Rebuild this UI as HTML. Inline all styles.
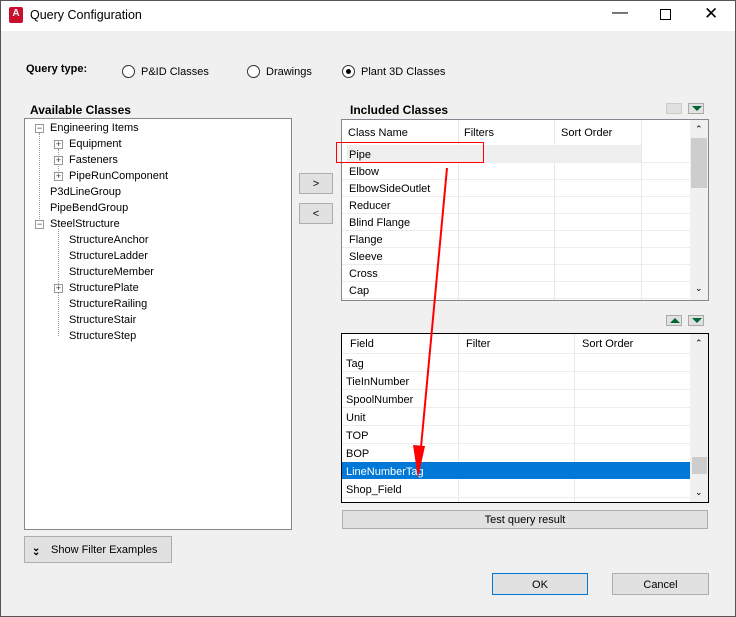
<html><head><style>
body{margin:0;width:736px;height:617px;position:relative;background:#f0f0f0;font-family:"Liberation Sans",sans-serif;font-size:11px;color:#000;overflow:hidden}
.a{position:absolute}
.box{position:absolute;background:#fff;border:1px solid #828790;box-sizing:border-box}
.btn{position:absolute;background:#e1e1e1;border:1px solid #adadad;box-sizing:border-box;text-align:center;padding-top:1px}
.t{position:absolute;white-space:nowrap;margin-top:1px}
.rad{position:absolute;width:11px;height:11px;border:1px solid #333;border-radius:50%;background:#fff}
.pm{position:absolute;width:7px;height:7px;border:1px solid #999;background:#fff;font-size:9px;line-height:7px;text-align:center;color:#335}
.hl{position:absolute;height:0;border-top:1px solid #ececec}
.vl{position:absolute;border-left:1px solid #e8e8e8}
.arr{position:absolute;width:16px;height:11px;background:#e1e1e1;border:1px solid #aaa;box-sizing:border-box}
</style></head><body>
<div class="a" style="left:0;top:0;width:736px;height:31px;background:#fff"></div>
<div class="a" style="left:9px;top:7px;width:14px;height:16px;background:#c8102e;border-radius:2px;color:#fff;font-size:10px;font-weight:bold;text-align:center;line-height:13px">A</div>
<div class="t" style="left:30px;top:7px;font-size:12.5px">Query Configuration</div>
<div class="t" style="left:612px;top:3px;font-size:16px">&#8212;</div>
<div class="a" style="left:660px;top:9px;width:9px;height:9px;border:1px solid #000"></div>
<div class="t" style="left:704px;top:3px;font-size:17px">&#10005;</div>
<div class="a" style="left:0;top:0;width:734px;height:615px;border:1px solid #555"></div>

<div class="t" style="left:26px;top:62px;font-weight:bold">Query type:</div>
<div class="rad" style="left:122px;top:65px"></div><div class="t" style="left:141px;top:65px">P&amp;ID Classes</div>
<div class="rad" style="left:247px;top:65px"></div><div class="t" style="left:266px;top:65px">Drawings</div>
<div class="rad" style="left:342px;top:65px"></div><div class="a" style="left:346px;top:69px;width:5px;height:5px;border-radius:50%;background:#000"></div><div class="t" style="left:361px;top:65px">Plant 3D Classes</div>

<div class="t" style="left:30px;top:102px;font-weight:bold;font-size:12px">Available Classes</div>
<div class="box" style="left:24px;top:118px;width:268px;height:412px"></div>
<div class="a" style="left:39px;top:133px;height:96px;border-left:1px dotted #999"></div>
<div class="a" style="left:58px;top:149px;height:30px;border-left:1px dotted #999"></div>
<div class="a" style="left:58px;top:229px;height:107px;border-left:1px dotted #999"></div>
<div class="pm" style="left:35px;top:124px">−</div><div class="t" style="left:50px;top:121px">Engineering Items</div>
<div class="pm" style="left:54px;top:140px">+</div><div class="t" style="left:69px;top:137px">Equipment</div>
<div class="pm" style="left:54px;top:156px">+</div><div class="t" style="left:69px;top:153px">Fasteners</div>
<div class="pm" style="left:54px;top:172px">+</div><div class="t" style="left:69px;top:169px">PipeRunComponent</div>
<div class="t" style="left:50px;top:185px">P3dLineGroup</div>
<div class="t" style="left:50px;top:201px">PipeBendGroup</div>
<div class="pm" style="left:35px;top:220px">−</div><div class="t" style="left:50px;top:217px">SteelStructure</div>
<div class="t" style="left:69px;top:233px">StructureAnchor</div>
<div class="t" style="left:69px;top:249px">StructureLadder</div>
<div class="t" style="left:69px;top:265px">StructureMember</div>
<div class="pm" style="left:54px;top:284px">+</div><div class="t" style="left:69px;top:281px">StructurePlate</div>
<div class="t" style="left:69px;top:297px">StructureRailing</div>
<div class="t" style="left:69px;top:313px">StructureStair</div>
<div class="t" style="left:69px;top:329px">StructureStep</div>

<div class="btn" style="left:299px;top:173px;width:34px;height:21px;line-height:19px">&gt;</div>
<div class="btn" style="left:299px;top:203px;width:34px;height:21px;line-height:19px">&lt;</div>

<div class="t" style="left:350px;top:102px;font-weight:bold;font-size:12px">Included Classes</div>
<div class="arr" style="left:666px;top:103px;border-color:#ccc"></div>
<div class="arr" style="left:688px;top:103px"><div class="a" style="left:3px;top:2px;border:5px solid transparent;border-top:5px solid #063;border-bottom:0"></div></div>
<div class="box" style="left:341px;top:119px;width:368px;height:182px"></div>
<div class="hl" style="left:342px;top:162px;width:348px"></div><div class="hl" style="left:342px;top:179px;width:348px"></div><div class="hl" style="left:342px;top:196px;width:348px"></div><div class="hl" style="left:342px;top:213px;width:348px"></div><div class="hl" style="left:342px;top:230px;width:348px"></div><div class="hl" style="left:342px;top:247px;width:348px"></div><div class="hl" style="left:342px;top:264px;width:348px"></div><div class="hl" style="left:342px;top:281px;width:348px"></div><div class="hl" style="left:342px;top:298px;width:348px"></div>
<div class="vl" style="left:458px;top:120px;height:180px"></div>
<div class="vl" style="left:554px;top:120px;height:180px"></div>
<div class="vl" style="left:641px;top:120px;height:180px"></div>
<div class="a" style="left:347px;top:145px;width:294px;height:17px;background:#efefef"></div>
<div class="a" style="left:690px;top:120px;width:18px;height:180px;background:#f0f0f0"></div>
<div class="a" style="left:691px;top:138px;width:16px;height:50px;background:#cdcdcd"></div>
<div class="t" style="left:695px;top:123px;font-size:9px">&#8963;</div><div class="t" style="left:695px;top:282px;font-size:9px">&#8964;</div>
<div class="t" style="left:348px;top:126px">Class Name</div><div class="t" style="left:464px;top:126px">Filters</div><div class="t" style="left:561px;top:126px">Sort Order</div>
<div class="t" style="left:349px;top:148px">Pipe</div>
<div class="t" style="left:349px;top:165px">Elbow</div>
<div class="t" style="left:349px;top:182px">ElbowSideOutlet</div>
<div class="t" style="left:349px;top:199px">Reducer</div>
<div class="t" style="left:349px;top:216px">Blind Flange</div>
<div class="t" style="left:349px;top:233px">Flange</div>
<div class="t" style="left:349px;top:250px">Sleeve</div>
<div class="t" style="left:349px;top:267px">Cross</div>
<div class="t" style="left:349px;top:284px">Cap</div>
<div class="a" style="left:336px;top:142px;width:146px;height:19px;border:1.5px solid #f00"></div>

<div class="arr" style="left:666px;top:315px"><div class="a" style="left:3px;top:2px;border:5px solid transparent;border-bottom:5px solid #063;border-top:0"></div></div>
<div class="arr" style="left:688px;top:315px"><div class="a" style="left:3px;top:2px;border:5px solid transparent;border-top:5px solid #063;border-bottom:0"></div></div>
<div class="box" style="left:341px;top:333px;width:368px;height:170px;border:1px solid #000"></div>
<div class="hl" style="left:342px;top:353px;width:348px"></div><div class="hl" style="left:342px;top:371px;width:348px"></div><div class="hl" style="left:342px;top:389px;width:348px"></div><div class="hl" style="left:342px;top:407px;width:348px"></div><div class="hl" style="left:342px;top:425px;width:348px"></div><div class="hl" style="left:342px;top:443px;width:348px"></div><div class="hl" style="left:342px;top:497px;width:348px"></div>
<div class="vl" style="left:458px;top:334px;height:168px"></div>
<div class="vl" style="left:574px;top:334px;height:168px"></div>
<div class="a" style="left:342px;top:462px;width:348px;height:17px;background:#0078d7"></div>
<div class="a" style="left:690px;top:334px;width:18px;height:168px;background:#f0f0f0"></div>
<div class="a" style="left:692px;top:457px;width:15px;height:17px;background:#cdcdcd"></div>
<div class="t" style="left:695px;top:337px;font-size:9px">&#8963;</div><div class="t" style="left:695px;top:486px;font-size:9px">&#8964;</div>
<div class="t" style="left:350px;top:337px">Field</div><div class="t" style="left:466px;top:337px">Filter</div><div class="t" style="left:582px;top:337px">Sort Order</div>
<div class="t" style="left:346px;top:357px">Tag</div>
<div class="t" style="left:346px;top:375px">TieInNumber</div>
<div class="t" style="left:346px;top:393px">SpoolNumber</div>
<div class="t" style="left:346px;top:411px">Unit</div>
<div class="t" style="left:346px;top:429px">TOP</div>
<div class="t" style="left:346px;top:447px">BOP</div>
<div class="t" style="left:346px;top:465px;color:#fff">LineNumberTag</div>
<div class="t" style="left:346px;top:483px">Shop_Field</div>

<svg class="a" style="left:0;top:0" width="736" height="617"><line x1="447" y1="168" x2="420" y2="458" stroke="#f00" stroke-width="2"/><polygon points="413,445 425,446 418,478" fill="#f00"/></svg>

<div class="btn" style="left:342px;top:510px;width:366px;height:19px;line-height:17px">Test query result</div>
<div class="btn" style="left:24px;top:536px;width:148px;height:27px;line-height:25px;text-align:left;padding-left:26px">Show Filter Examples</div>
<div class="t" style="left:32px;top:542px;font-size:10px;font-weight:bold">&#8964;</div><div class="t" style="left:32px;top:546px;font-size:10px;font-weight:bold">&#8964;</div>
<div class="btn" style="left:492px;top:573px;width:96px;height:22px;line-height:20px;border:1px solid #0078d7">OK</div>
<div class="btn" style="left:612px;top:573px;width:97px;height:22px;line-height:20px">Cancel</div>
</body></html>
